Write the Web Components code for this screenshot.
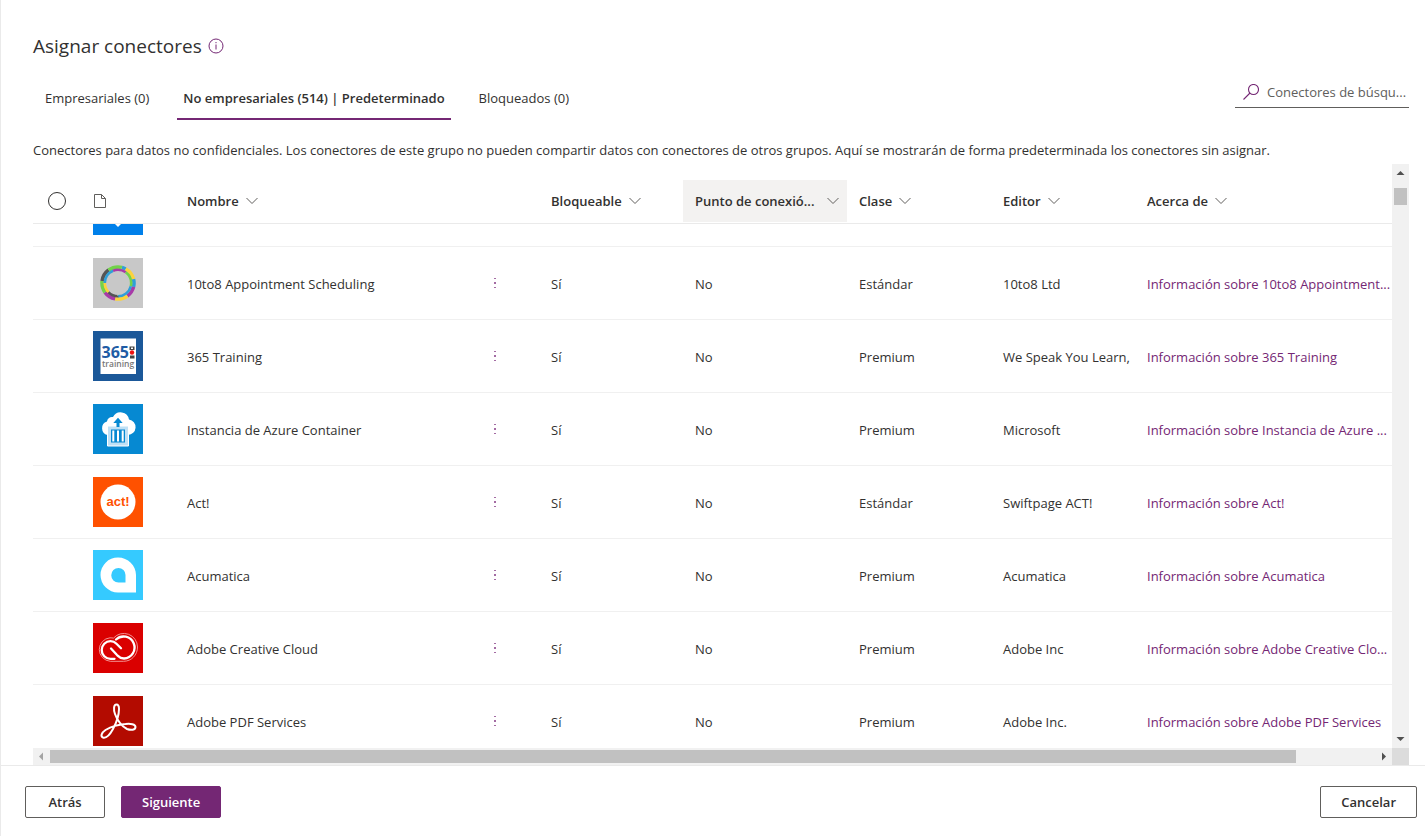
<!DOCTYPE html>
<html lang="es">
<head>
<meta charset="utf-8">
<title>Asignar conectores</title>
<style>
  body {
    margin: 0;
    font: 13px/20px "Open Sans", "Noto Sans", sans-serif;
    color: #323130;
    --accent: #742774;
    --border: #eaeaea;
  }
</style>
</head>
<body>
<policy-wizard>
  <page-heading slot="heading">Asignar conectores</page-heading>
  <pivot-tabs slot="tabs"></pivot-tabs>
  <search-box slot="search" placeholder="Conectores de búsqu..."></search-box>
  <span slot="description">Conectores para datos no confidenciales. Los conectores de este grupo no pueden compartir datos con conectores de otros grupos. Aquí se mostrarán de forma predeterminada los conectores sin asignar.</span>
  <scroll-frame slot="list"><connector-table></connector-table></scroll-frame>
  <action-button slot="nav">Atrás</action-button>
  <action-button slot="nav" primary>Siguiente</action-button>
  <action-button slot="cancel">Cancelar</action-button>
</policy-wizard>

<script>
function attach(el, html) {
  const root = el.attachShadow({ mode: 'open' });
  root.innerHTML = html;
  return root;
}

// Overall page: heading, tabs + search, description, list, footer.
customElements.define('policy-wizard', class extends HTMLElement {
  constructor() {
    super();
    attach(this, `
      <style>
        :host {
          display: flex;
          flex-direction: column;
          height: 100vh;
          box-sizing: border-box;
          border-left: 1px solid var(--border);
          background: #fff;
        }
        main {
          flex: 1;
          min-height: 0;
          display: flex;
          flex-direction: column;
          padding: 32px 16px 0 32px;
        }
        .bar {
          display: flex;
          justify-content: space-between;
          align-items: flex-start;
          margin: 16px 0 20px;
        }
        p { margin: 0 0 4px; }
        footer {
          display: flex;
          gap: 16px;
          padding: 20px 8px 18px 24px;
          border-top: 1px solid var(--border);
        }
        .space { flex: 1; }
      </style>
      <main>
        <slot name="heading"></slot>
        <div class="bar"><slot name="tabs"></slot><slot name="search"></slot></div>
        <p><slot name="description"></slot></p>
        <slot name="list"></slot>
      </main>
      <footer>
        <slot name="nav"></slot>
        <div class="space"></div>
        <slot name="cancel"></slot>
      </footer>
    `);
  }
});

customElements.define('page-heading', class extends HTMLElement {
  constructor() {
    super();
    attach(this, `
      <style>
        :host { display: flex; align-items: center; gap: 6px; }
        h1 { margin: 0; font-size: 19px; line-height: 28px; font-weight: 400; }
        button { border: 0; padding: 0; background: none; height: 18px; }
        svg { display: block; }
      </style>
      <h1><slot></slot></h1>
      <button aria-label="Información">
        <svg width="16" height="16" viewBox="0 0 16 16" fill="none" stroke="#742774">
          <circle cx="8" cy="8" r="7"/><path d="M8 6.5v5M8 4v1.2"/>
        </svg>
      </button>
    `);
  }
});

customElements.define('pivot-tabs', class extends HTMLElement {
  constructor() {
    super();
    attach(this, `
      <style>
        :host { display: flex; gap: 22px; padding-left: 6px; }
        button {
          height: 44px;
          padding: 2px 6px 0;
          border: 0;
          border-bottom: 2px solid transparent;
          background: none;
          font: inherit;
          color: inherit;
          white-space: nowrap;
        }
        button[aria-selected=true] {
          font-weight: 600;
          border-color: var(--accent);
        }
      </style>
      <button role="tab" aria-selected="false">Empresariales (0)</button>
      <button role="tab" aria-selected="true">No empresariales (514) | Predeterminado</button>
      <button role="tab" aria-selected="false">Bloqueados (0)</button>
    `);
    const tabs = this.shadowRoot.querySelectorAll('button');
    tabs.forEach(tab => tab.addEventListener('click', () => {
      tabs.forEach(t => t.setAttribute('aria-selected', t === tab));
    }));
  }
});

customElements.define('search-box', class extends HTMLElement {
  constructor() {
    super();
    const root = attach(this, `
      <style>
        :host { display: block; width: 174px; }
        label {
          display: flex;
          align-items: center;
          gap: 8px;
          height: 31px;
          padding-left: 8px;
          border-bottom: 1px solid #605e5c;
        }
        svg { flex: none; }
        input {
          flex: 1;
          min-width: 0;
          padding: 0;
          border: 0;
          outline: 0;
          background: none;
          font: inherit;
          color: inherit;
        }
        input::placeholder { color: #605e5c; opacity: 1; }
      </style>
      <label>
        <svg width="16" height="16" viewBox="0 0 16 16" fill="none" stroke="#742774" stroke-width="1.1">
          <circle cx="10.5" cy="5.5" r="5"/><path d="M7 9L.5 15.5"/>
        </svg>
        <input type="text">
      </label>
    `);
    const input = root.querySelector('input');
    input.placeholder = this.getAttribute('placeholder');
    input.setAttribute('aria-label', input.placeholder);
  }
});

customElements.define('action-button', class extends HTMLElement {
  constructor() {
    super();
    attach(this, `
      <style>
        :host { display: block; }
        button {
          box-sizing: border-box;
          min-width: 80px;
          height: 32px;
          padding: 0 20px;
          border: 1px solid #605e5c;
          border-radius: 2px;
          background: #fff;
          color: #323130;
          font: inherit;
          font-weight: 600;
        }
        :host([primary]) button {
          background: var(--accent);
          border-color: var(--accent);
          color: #fff;
        }
      </style>
      <button><slot></slot></button>
    `);
  }
});

// Scrollable area with always visible 17px scrollbars.
customElements.define('scroll-frame', class extends HTMLElement {
  constructor() {
    super();
    attach(this, `
      <style>
        :host {
          flex: 1;
          min-height: 0;
          display: grid;
          grid-template: minmax(0, 1fr) 17px / minmax(0, 1fr) 17px;
        }
        .view { overflow: auto; scrollbar-width: none; }
        .bar { display: flex; background: #f1f1f1; }
        .v { flex-direction: column; }
        .arrow { flex: none; width: 17px; height: 17px; fill: #505050; }
        .off { fill: #a3a3a3; }
        .track { flex: 1; display: flex; }
        .v .track { flex-direction: column; padding: 7px 2px 0; }
        .h .track { padding: 2px 0; }
        .thumb { background: #c1c1c1; }
        .v .thumb { height: 17px; }
        .h .thumb { width: 94%; }
        .corner { background: #dcdcdc; }
      </style>
      <div class="view"><slot></slot></div>
      <div class="bar v">
        <svg class="arrow" viewBox="0 0 17 17"><path d="M4.5 11l4-4 4 4z"/></svg>
        <div class="track"><div class="thumb"></div></div>
        <svg class="arrow" viewBox="0 0 17 17"><path d="M4.5 6l4 4 4-4z"/></svg>
      </div>
      <div class="bar h">
        <svg class="arrow off" viewBox="0 0 17 17"><path d="M10 4.5l-4 4 4 4z"/></svg>
        <div class="track"><div class="thumb"></div></div>
        <svg class="arrow" viewBox="0 0 17 17"><path d="M7 4.5l4 4-4 4z"/></svg>
      </div>
      <div class="corner"></div>
    `);
  }

  scrollToRow(offset) {
    this.shadowRoot.querySelector('.view').scrollTop = offset;
  }
});

// One arc of the 10to8 ring; start and length are percentages of the circle.
function arc(r, color, start, length) {
  return `<circle cx="25" cy="25" r="${r}" pathLength="100" stroke="${color}" stroke-dasharray="${length} ${100 - length}" stroke-dashoffset="${-start}"/>`;
}

const logos = {
  blue: `<rect width="50" height="50" fill="#0080ea"/><path d="M12 29l13 13 13-13z" fill="#fff"/>`,
  tento8: `<rect width="50" height="50" fill="#c8c8c8"/>
    <g fill="none" stroke-width="3.6" transform="rotate(-90 25 25)">
      ${arc(16, '#2f9fd8', 4, 4)}
      ${arc(16, '#fbd33c', 8, 13)}
      ${arc(16, '#2f9fd8', 21, 8)}
      ${arc(16, '#a83aa8', 29, 11)}
      ${arc(16, '#fbd33c', 40, 13)}
      ${arc(16, '#a83aa8', 53, 12)}
      ${arc(16, '#72d24a', 65, 12)}
      ${arc(16, '#555', 77, 13)}
      ${arc(16, '#72d24a', 90, 10)}
      ${arc(16, '#72d24a', 0, 4)}
      <g stroke-width="2.6">
        ${arc(13.2, '#a83aa8', 0, 10)}
        ${arc(13.2, '#72d24a', 10, 19)}
        ${arc(13.2, '#2f9fd8', 29, 21)}
        ${arc(13.2, '#555', 50, 13)}
        ${arc(13.2, '#fbd33c', 63, 12)}
        ${arc(13.2, '#2f9fd8', 75, 19)}
        ${arc(13.2, '#a83aa8', 94, 6)}
      </g>
    </g>`,
  training: `<rect width="50" height="50" fill="#1b5899"/><rect x="7.5" y="7.5" width="35.5" height="35.5" fill="#fff"/>
    <text x="8.500" y="27" font-family="Open Sans" font-weight="700" font-size="16" fill="#1f5ca5">365</text>
    <text x="9" y="35.500" font-family="Open Sans" font-weight="600" font-size="8.500" fill="#777">training</text>
    <path d="M36.500 15.500h5v3.500h-5zM37 24.500h4.500v3H37z" fill="#444"/><path d="M38 16.500h2v1.500h-2z" fill="#fff"/><circle cx="39" cy="21.500" r="2.200" fill="#e11"/>`,
  container: `<rect width="50" height="50" fill="#0689d2"/>
    <path d="M14.5 31a7 7 0 0 1-.5-13.5 5 5 0 0 1 6-4.5 8.500 8.500 0 0 1 16 2.500 7.800 7.800 0 0 1-1 15.500z" fill="#fff"/>
    <path d="M14.500 22h21v20h-21z" fill="#bfe0f5" stroke="#fff"/>
    <path d="M18 25.500h14v13H18z" fill="#0689d2"/>
    <path d="M20.300 26.500v11M25 26.500v11M29.700 26.500v11" stroke="#fff" stroke-width="2"/>
    <path d="M23.500 23v-4h-3.200L25 13.800l4.700 5.200h-3.200v4z" fill="#0689d2"/>`,
  act: `<rect width="50" height="50" fill="#ff5100"/><circle cx="25" cy="25" r="17.500" fill="#fff"/>
    <text x="25" y="28.500" text-anchor="middle" font-family="Liberation Sans" font-weight="700" font-size="13" fill="#ff5100">act!</text>`,
  acumatica: `<rect width="50" height="50" fill="#35caff"/>
    <path fill-rule="evenodd" fill="#fff" d="M25 7.500c10 0 18 8 18 17.500v17.500H25A17.500 17.500 0 0 1 25 7.500zM25.500 18a7 7 0 1 0 0 14.500h7V25a7 7 0 0 0-7-7z"/>`,
  cloud: `<rect width="50" height="50" fill="#da0000"/>
    <g fill="none" stroke-linecap="round" stroke-linejoin="round">
      <path d="M17 38.300a11.800 11.800 0 0 1 0-23.500c1.500 0 2.500.2 3.500.3A13.700 13.700 0 0 1 44.500 24c0 8-6 14.300-13.500 14.300z" stroke="#f5a0a0" stroke-width=".9"/>
      <path d="M21.500 35.800H17.500a8.800 8.800 0 0 1 0-17.600c3 0 4.500 1 6 2.500l4.500 4.500" stroke="#fff" stroke-width="2.300"/>
      <path d="M23 16.500a11 11 0 1 1 8 19c-4 0-5-1.500-7-3.500l-6-6.500" stroke="#fff" stroke-width="2.300"/>
    </g>`,
  pdf: `<rect width="50" height="50" fill="#b30b00"/>
    <path d="M23.500 8.500c-3 0-3 5-1.500 9.500 2 6 7 12.500 12 15 4 1.500 8.500 1 8.500-2s-5-3.500-10-3c-7 .5-14 2.500-20 6-4.500 3-5 6.500-2.500 7.500 3.500 1 7-3 10-8.500 3.500-6.500 6-13.500 6-20 0-2.500-1-4.500-2.500-4.500z" fill="none" stroke="#fff" stroke-width="2" stroke-linejoin="round"/>`
};

customElements.define('connector-logo', class extends HTMLElement {
  constructor() {
    super();
    attach(this, `
      <style>
        :host { display: block; width: 50px; height: 50px; }
        svg { display: block; }
      </style>
      <svg width="50" height="50" viewBox="0 0 50 50">${logos[this.getAttribute('name')] || ''}</svg>
    `);
  }
});

const columns = [
  { label: 'Nombre' },
  { label: 'Bloqueable' },
  { label: 'Punto de conexió...', active: true },
  { label: 'Clase' },
  { label: 'Editor' },
  { label: 'Acerca de' }
];

// logo, name, class, publisher, about link
const connectors = [
  ['blue', '', '', '', ''],
  ['tento8', '10to8 Appointment Scheduling', 'Estándar', '10to8 Ltd', 'Información sobre 10to8 Appointment...'],
  ['training', '365 Training', 'Premium', 'We Speak You Learn,', 'Información sobre 365 Training'],
  ['container', 'Instancia de Azure Container', 'Premium', 'Microsoft', 'Información sobre Instancia de Azure ...'],
  ['act', 'Act!', 'Estándar', 'Swiftpage ACT!', 'Información sobre Act!'],
  ['acumatica', 'Acumatica', 'Premium', 'Acumatica', 'Información sobre Acumatica'],
  ['cloud', 'Adobe Creative Cloud', 'Premium', 'Adobe Inc', 'Información sobre Adobe Creative Clo...'],
  ['pdf', 'Adobe PDF Services', 'Premium', 'Adobe Inc.', 'Información sobre Adobe PDF Services']
];

const chevron = `<svg width="12" height="8" viewBox="0 0 12 8" fill="none" stroke="#605e5c"><path d="M.5 1L6 6.500 11.500 1"/></svg>`;

function headerCell(col) {
  return `<th class="${col.active ? 'active' : ''}"><button>${col.label}${chevron}</button></th>`;
}

function row([logo, name, tier, publisher, about]) {
  return `
    <tr>
      <td></td>
      <td class="image"><connector-logo name="${logo}"></connector-logo></td>
      <td><div class="name"><span>${name}</span>
        <button class="more" aria-label="Más acciones"><svg width="4" height="12" viewBox="0 0 4 12" fill="#a36ba3"><path d="M1 0h2v1H1zM1 4h2v2H1zM1 9h2v1H1z"/></svg></button>
      </div></td>
      <td>${name && 'Sí'}</td>
      <td>${name && 'No'}</td>
      <td>${tier}</td>
      <td>${publisher}</td>
      <td><a href="#">${about}</a></td>
    </tr>`;
}

customElements.define('connector-table', class extends HTMLElement {
  constructor() {
    super();
    attach(this, `
      <style>
        :host { display: block; }
        table {
          width: 1446px;
          min-width: 100%;
          table-layout: fixed;
          border-spacing: 0;
        }
        .check { width: 48px; }
        .logo { width: 94px; }
        .wide { width: 364px; }
        .mid { width: 144px; }
        .endpoint { width: 164px; }
        th {
          position: sticky;
          top: 0;
          z-index: 1;
          height: 42px;
          padding: 16px 0 1px;
          border-bottom: 1px solid var(--border);
          background: #fff;
          text-align: left;
        }
        th button {
          display: flex;
          align-items: center;
          gap: 7px;
          width: 100%;
          height: 42px;
          padding: 0 8px 0 12px;
          border: 0;
          background: none;
          font: inherit;
          font-weight: 600;
          color: inherit;
          white-space: nowrap;
        }
        th svg { flex: none; }
        .active button { background: #f3f2f1; justify-content: space-between; }
        input {
          display: block;
          appearance: none;
          box-sizing: border-box;
          width: 18px;
          height: 18px;
          margin: 0 auto;
          border: 1px solid #323130;
          border-radius: 50%;
        }
        input:checked { background: var(--accent); }
        td {
          height: 50px;
          padding: 12px 0 10px 12px;
          border-bottom: 1px solid #f0f0f0;
          white-space: nowrap;
          overflow: hidden;
        }
        .image { padding: 11px 0 11px 12px; }
        .name { display: flex; justify-content: space-between; align-items: center; padding-right: 36px; }
        .more { padding: 4px 6px; border: 0; background: none; }
        .more svg { display: block; }
        a { color: var(--accent); text-decoration: none; }
      </style>
      <table>
        <colgroup>
          <col class="check"><col class="logo"><col class="wide"><col class="mid">
          <col class="endpoint"><col class="mid"><col class="mid"><col>
        </colgroup>
        <thead>
          <tr>
            <th><input type="checkbox" aria-label="Seleccionar todo"></th>
            <th><button aria-label="Icono"><svg width="14" height="16" viewBox="0 0 14 16" fill="none" stroke="#605e5c"><path d="M1.500 1.500h7l4 4v9h-11zM8.500 1.500v4h4"/></svg></button></th>
            ${columns.map(headerCell).join('')}
          </tr>
        </thead>
        <tbody>${connectors.map(row).join('')}</tbody>
      </table>
    `);
  }

  connectedCallback() {
    this.parentNode.scrollToRow(50);
  }
});
</script>
</body>
</html>
